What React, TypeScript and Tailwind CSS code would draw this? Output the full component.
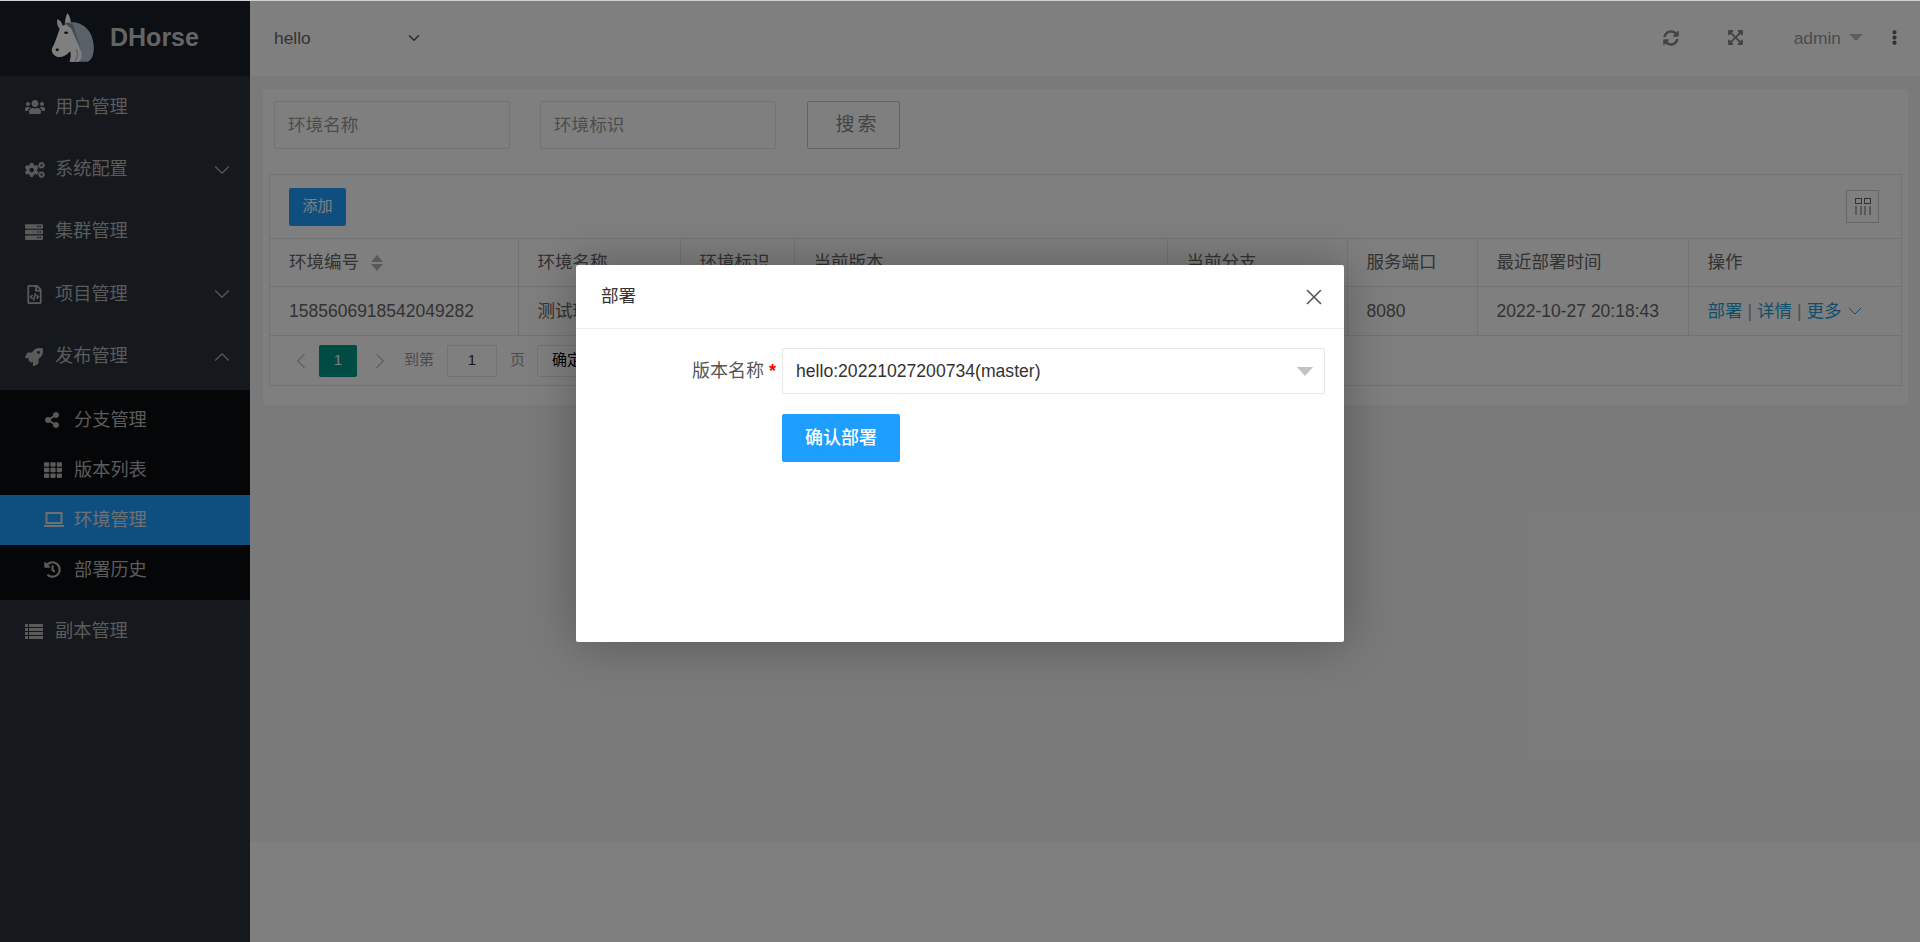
import { ChevronDown, ChevronLeft, ChevronRight, ChevronUp, X } from "lucide-react";
import {
  FaCogs,
  FaEllipsisV,
  FaExpandArrowsAlt,
  FaHistory,
  FaRegFileCode,
  FaRocket,
  FaServer,
  FaShareAlt,
  FaSyncAlt,
  FaTh,
  FaUsers,
} from "react-icons/fa";

const Logo = () => (
  <svg width="46" height="52" viewBox="0 0 140 156" className="shrink-0">
    <path d="M45 35 C75 20 125 40 130 100 C132 125 125 145 112 150 L60 150 L75 105 Z" fill="#b4c4d2" />
    <path d="M20 20 C28 24 34 32 36 42 L26 50 C20 42 16 30 20 20 Z" fill="#f2f2f2" />
    <path d="M50 2 C58 12 62 26 60 38 L42 42 C42 28 44 14 50 2 Z" fill="#ffffff" />
    <path d="M28 46 C38 36 52 34 62 40 C72 62 78 90 92 120 C96 134 92 146 84 150 L56 150 C60 138 62 128 58 118 C46 132 30 140 16 134 C4 128 -2 114 6 104 C14 90 20 66 28 46 Z" fill="#ffffff" />
    <path d="M40 34 C52 28 64 32 70 42 C74 58 84 92 96 118 C86 100 72 76 62 50 C56 44 48 38 40 34 Z" fill="#8497a8" />
    <ellipse cx="46" cy="62" rx="6" ry="4" fill="#222" />
    <ellipse cx="19" cy="114" rx="5" ry="4" fill="#222" />
    <path d="M78 112 C82 124 80 138 74 148" stroke="#777" strokeWidth="2" fill="none" />
  </svg>
);

const LaptopIcon = () => (
  <svg width="20" height="16" viewBox="0 0 20 16" fill="none">
    <rect x="2.5" y="1" width="15" height="10" stroke="currentColor" strokeWidth="2" />
    <rect x="0" y="13" width="20" height="2" fill="currentColor" />
  </svg>
);

const ListIcon = () => (
  <svg width="18" height="15" viewBox="0 0 18 15" fill="currentColor">
    <path d="M0 0h3v3H0zM4 0h14v3H4zM0 4h3v3H0zM4 4h14v3H4zM0 8h3v3H0zM4 8h14v3H4zM0 12h3v3H0zM4 12h14v3H4z" />
  </svg>
);

const ColumnsIcon = () => (
  <svg width="18" height="17" viewBox="0 0 18 17" fill="none" stroke="#666" strokeWidth="1">
    <rect x="1.5" y="0.5" width="6" height="5" />
    <rect x="10.5" y="0.5" width="6" height="5" />
    <path d="M2 8v9M7 8v9M11 8v9M16 8v9" />
  </svg>
);

const menu = [
  { icon: <FaUsers size={20} />, label: "用户管理" },
  { icon: <FaCogs size={20} />, label: "系统配置", arrow: "down" },
  { icon: <FaServer size={18} />, label: "集群管理" },
  { icon: <FaRegFileCode size={19} />, label: "项目管理", arrow: "down" },
  { icon: <FaRocket size={18} />, label: "发布管理", arrow: "up" },
];

const subMenu = [
  { icon: <FaShareAlt size={16} />, label: "分支管理" },
  { icon: <FaTh size={18} />, label: "版本列表" },
  { icon: <LaptopIcon />, label: "环境管理", active: true },
  { icon: <FaHistory size={17} />, label: "部署历史" },
];

const MenuItem = ({ icon, label, arrow }: { icon: React.ReactNode; label: string; arrow?: string }) => (
  <div className="flex h-[62.4px] items-center pl-[25px] pr-[15px] text-[18.2px] text-[#b5b5b5]">
    <span className="flex w-[30px] shrink-0 items-center">{icon}</span>
    <span className="flex-1">{label}</span>
    {arrow === "down" && <ChevronDown size={26} strokeWidth={1} />}
    {arrow === "up" && <ChevronUp size={26} strokeWidth={1} />}
  </div>
);

const Sidebar = () => (
  <aside className="w-[250px] shrink-0 bg-[#2a323d]">
    <div className="flex h-[76px] items-center bg-[#181e26] pl-[51px]">
      <Logo />
      <span className="ml-[13px] font-bold text-[25px] text-[#c8c8c8]">DHorse</span>
    </div>
    {menu.map((item) => (
      <MenuItem key={item.label} {...item} />
    ))}
    <div className="mt-[2px] rounded-[2px] bg-[#0b0d11] py-[5px]">
      {subMenu.map((item) => (
        <div
          key={item.label}
          className={`flex h-[50px] items-center pl-[44px] text-[18.2px] ${
            item.active ? "bg-[#1e9fff] text-[#e0e0e0]" : "text-[#b5b5b5]"
          }`}
        >
          <span className="flex w-[30px] shrink-0 items-center">{item.icon}</span>
          <span className="pt-[2px]">{item.label}</span>
        </div>
      ))}
    </div>
    <MenuItem icon={<ListIcon />} label="副本管理" />
  </aside>
);

const Topbar = () => (
  <header className="flex h-[76px] shrink-0 items-center bg-white pl-[24px] text-[17.4px] text-[#555]">
    <span className="w-[131px] text-[#666]">hello</span>
    <ChevronDown size={18} strokeWidth={2} className="text-[#555]" />
    <div className="ml-auto flex items-center text-[#999]">
      <FaSyncAlt size={16} className="text-[#888]" />
      <FaExpandArrowsAlt size={17} className="ml-[48px] text-[#888]" />
      <span className="ml-[50px]">admin</span>
      <span className="ml-[8px] h-0 w-0 border-x-[7px] border-t-[7px] border-x-transparent border-t-[#bbb]" />
      <FaEllipsisV size={15} className="ml-[24px] mr-[18px] text-[#666]" />
    </div>
  </header>
);

const SearchInput = ({ placeholder }: { placeholder: string }) => (
  <div className="flex h-[48px] w-[236px] items-center rounded-[2px] border border-[#e6e6e6] pl-[13px] text-[#999]">
    {placeholder}
  </div>
);

const th = "h-[48px] border border-[#e6e6e6] pl-[19px] text-left font-normal";
const td = "h-[49px] border border-[#e6e6e6] pl-[19px]";

const EnvTable = () => (
  <div className="mt-[25px] border border-[#e6e6e6] text-[17.5px] text-[#666]">
    <div className="flex h-[63px] items-center justify-between pl-[19px] pr-[22px]">
      <button className="h-[38px] w-[57px] rounded-[2px] bg-[#1e9fff] text-[15px] text-white">添加</button>
      <button className="flex h-[33px] w-[33px] items-center justify-center border border-[#ccc]">
        <ColumnsIcon />
      </button>
    </div>
    <table className="w-full table-fixed border-collapse">
      <colgroup>
        <col className="w-[248px]" />
        <col className="w-[162px]" />
        <col className="w-[114px]" />
        <col className="w-[373px]" />
        <col className="w-[180px]" />
        <col className="w-[130px]" />
        <col className="w-[211px]" />
        <col />
      </colgroup>
      <thead>
        <tr className="[&>th:first-child]:border-l-0 [&>th:last-child]:border-r-0">
          <th className={th}>
            <span className="flex items-center gap-[12px]">
              环境编号
              <span className="flex flex-col gap-[2px]">
                <span className="h-0 w-0 border-x-[6px] border-b-[7px] border-x-transparent border-b-[#b2b2b2]" />
                <span className="h-0 w-0 border-x-[6px] border-t-[7px] border-x-transparent border-t-[#b2b2b2]" />
              </span>
            </span>
          </th>
          <th className={th}>环境名称</th>
          <th className={th}>环境标识</th>
          <th className={th}>当前版本</th>
          <th className={th}>当前分支</th>
          <th className={th}>服务端口</th>
          <th className={th}>最近部署时间</th>
          <th className={th}>操作</th>
        </tr>
      </thead>
      <tbody>
        <tr className="[&>td:first-child]:border-l-0 [&>td:last-child]:border-r-0">
          <td className={td}>1585606918542049282</td>
          <td className={td}>测试环境</td>
          <td className={td}>test</td>
          <td className={td}></td>
          <td className={td}></td>
          <td className={td}>8080</td>
          <td className={td}>2022-10-27 20:18:43</td>
          <td className={td}>
            <span className="flex items-center text-[#1e9fd8]">
              部署<span className="mx-[5px] text-[#999]">|</span>详情<span className="mx-[5px] text-[#999]">|</span>更多
              <ChevronDown size={24} strokeWidth={1} className="ml-[1px]" />
            </span>
          </td>
        </tr>
      </tbody>
    </table>
    <div className="flex h-[49px] items-center pl-[18px] text-[15px] text-[#999]">
      <ChevronLeft size={26} strokeWidth={1} className="text-[#bbb]" />
      <span className="ml-[5px] flex h-[32px] w-[38px] items-center justify-center rounded-[2px] bg-[#009688] text-white">1</span>
      <ChevronRight size={26} strokeWidth={1} className="ml-[10px] text-[#bbb]" />
      <span className="ml-[11px]">到第</span>
      <span className="ml-[13px] flex h-[32px] w-[50px] items-center justify-center rounded-[2px] border border-[#e6e6e6] text-[#333]">1</span>
      <span className="ml-[13px]">页</span>
      <span className="ml-[12px] flex h-[32px] w-[60px] items-center justify-center rounded-[2px] border border-[#e6e6e6] text-black">确定</span>
    </div>
  </div>
);

const DeployDialog = () => (
  <div className="absolute inset-0 z-10 bg-black/50">
    <div className="absolute left-[576px] top-[265px] h-[377px] w-[768px] rounded-[2px] bg-white shadow-[1px_1px_50px_rgba(0,0,0,0.3)]">
      <div className="flex h-[64px] items-center justify-between border-b border-[#eee] pl-[25px] pr-[17px] text-[17.6px] text-[#333]">
        部署
        <X size={26} strokeWidth={1.5} className="text-[#555]" />
      </div>
      <div className="flex pt-[19px]">
        <div className="flex h-[46px] w-[206px] items-center justify-end pr-[6px] text-[18px] text-[#555]">
          版本名称<span className="ml-[5px] text-[18px] font-bold text-[#f00]">*</span>
        </div>
        <div className="flex h-[46px] w-[543px] items-center justify-between rounded-[2px] border border-[#e6e6e6] pl-[13px] pr-[11px] text-[17.6px] text-[#333]">
          hello:20221027200734(master)
          <span className="h-0 w-0 border-x-[8px] border-t-[9px] border-x-transparent border-t-[#c2c2c2]" />
        </div>
      </div>
      <button className="ml-[206px] mt-[20px] h-[48px] w-[118px] rounded-[2px] bg-[#1e9fff] text-[18px] font-medium text-white">
        确认部署
      </button>
    </div>
  </div>
);

const App = () => {
  return (
    <div className="relative flex h-[942px] overflow-hidden font-['Liberation_Sans','Noto_Sans_CJK_SC',sans-serif] text-[17.6px]">
      <Sidebar />
      <main className="flex min-w-0 flex-1 flex-col bg-[#f5f5f5]">
        <Topbar />
        <div className="flex-1 pl-[13px] pr-[12px] pt-[13px]">
          <section className="rounded-[4px] bg-white px-[6px] pb-[19px] pt-[12px]">
            <div className="flex items-center pl-[5px]">
              <SearchInput placeholder="环境名称" />
              <div className="ml-[30px]">
                <SearchInput placeholder="环境标识" />
              </div>
              <button className="ml-[31px] h-[48px] w-[93px] rounded-[2px] border border-[#c9c9c9] pl-[8px] text-[19px] tracking-[3px] text-[#888]">
                搜索
              </button>
            </div>
            <EnvTable />
          </section>
        </div>
        <div className="h-[100px] shrink-0 bg-white" />
      </main>
      <DeployDialog />
      <div className="absolute inset-x-0 top-0 z-20 h-px bg-[#d0d0d0]" />
    </div>
  );
};

export default App;
